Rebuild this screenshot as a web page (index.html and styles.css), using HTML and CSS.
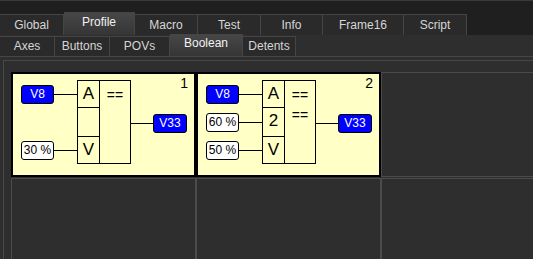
FILE: index.html
```html
<!DOCTYPE html>
<html lang="en">
<head>
    <meta charset="UTF-8">
    <title>Profile - Boolean</title>
    <link rel="stylesheet" href="styles.css">
</head>
<body>
    <div class="topbar"></div>

    <div class="tabs main-tabs">
        <div class="tab w64">Global</div>
        <div class="tab w71 active">Profile</div>
        <div class="tab w63">Macro</div>
        <div class="tab w63">Test</div>
        <div class="tab w62">Info</div>
        <div class="tab w81">Frame16</div>
        <div class="tab w63">Script</div>
    </div>

    <div class="tabs sub-tabs">
        <div class="tab w55">Axes</div>
        <div class="tab w55">Buttons</div>
        <div class="tab w60">POVs</div>
        <div class="tab w73 active">Boolean</div>
        <div class="tab w53">Detents</div>
    </div>

    <div class="panel">
        <div class="grid">
            <!-- rule 1 -->
            <div class="cell filled">
                <span class="num">1</span>
                <div class="diagram">
                    <div class="inputs">
                        <div class="in"><span class="pill var">V8</span><span class="wire"></span></div>
                        <div class="in"></div>
                        <div class="in"><span class="pill pct">30 %</span><span class="wire"></span></div>
                    </div>
                    <div class="gate">
                        <div class="slot">A</div>
                        <div class="ops">==</div>
                        <div class="slot"></div>
                        <div class="slot last">V</div>
                    </div>
                    <div class="out"><span class="wire"></span><span class="pill var">V33</span></div>
                </div>
            </div>

            <!-- rule 2 -->
            <div class="cell filled">
                <span class="num">2</span>
                <div class="diagram">
                    <div class="inputs">
                        <div class="in"><span class="pill var">V8</span><span class="wire"></span></div>
                        <div class="in"><span class="pill pct">60 %</span><span class="wire"></span></div>
                        <div class="in"><span class="pill pct">50 %</span><span class="wire"></span></div>
                    </div>
                    <div class="gate">
                        <div class="slot">A</div>
                        <div class="ops">==<br>==</div>
                        <div class="slot">2</div>
                        <div class="slot last">V</div>
                    </div>
                    <div class="out"><span class="wire"></span><span class="pill var">V33</span></div>
                </div>
            </div>

            <div class="cell"></div>
            <div class="cell"></div>
            <div class="cell"></div>
            <div class="cell"></div>
        </div>
    </div>
</body>
</html>
```

FILE: styles.css
```css
* { box-sizing: border-box; }

html, body { height: 100%; }

body {
    margin: 0;
    background: #2e2e2e;
    font-family: "Liberation Sans", Arial, sans-serif;
    font-size: 12px;
    color: #d6d6d6;
    overflow: hidden;
    display: flex;
    flex-direction: column;
}

.topbar {
    height: 14px;
    flex: none;
    background: #1f1f1f;
    border-top: 1px solid #3a3a3a;
}

.tabs {
    display: flex;
    align-items: flex-end;
    flex: none;
}
.main-tabs {
    height: 21px;
    background: #1f1f1f;
}
.sub-tabs {
    height: 22px;
    border-bottom: 1px solid #464646;
}

.tab {
    height: 21px;
    line-height: 20px;
    text-align: center;
    background: #2a2a2a;
    border: 1px solid #454545;
    border-left: none;
    border-bottom: none;
}
.sub-tabs .tab { height: 20px; line-height: 19px; }

.tab.active {
    height: 23px;
    line-height: 18px;
    color: #f2f2f2;
    background: linear-gradient(#474747, #353535);
}
.sub-tabs .tab.active { height: 22px; line-height: 17px; }

.w53 { width: 53px; }
.w55 { width: 55px; }
.w60 { width: 60px; }
.w62 { width: 62px; }
.w63 { width: 63px; }
.w64 { width: 64px; }
.w71 { width: 71px; }
.w73 { width: 73px; }
.w81 { width: 81px; }

.panel {
    flex: 1;
    min-height: 0;
    overflow: hidden;
    margin: 3px 0 0 3px;
    border-top: 1px solid #484848;
    border-left: 1px solid #484848;
    padding: 11px 0 0 7px;
}

.grid {
    display: grid;
    grid-template-columns: repeat(3, 185px);
    grid-auto-rows: 105px;
    row-gap: 1px;
}

.cell {
    border: 1px solid #4b4b4b;
    background: #2e2e2e;
}

.cell.filled {
    position: relative;
    border: 2px solid #000;
    background: #ffffc6;
    color: #000;
    padding: 6px 0 0 8px;
}

.num {
    position: absolute;
    top: 1px;
    right: 6px;
    font-size: 14px;
}

.diagram {
    display: flex;
    align-items: center;
}

.inputs {
    display: grid;
    grid-template-rows: 28px 28px 28px;
}
.in {
    display: flex;
    align-items: center;
}

.pill {
    width: 33px;
    height: 19px;
    line-height: 17px;
    text-align: center;
    border: 1px solid #000;
    border-radius: 3px;
    font-size: 12px;
}
.pill.var { background: #0000ff; color: #fff; }
.pill.pct { background: #fff; color: #000; }
.out .pill { width: 34px; }

.wire {
    width: 23px;
    height: 1px;
    background: #000;
}
.out .wire { width: 22px; }

.out {
    display: flex;
    align-items: center;
    margin-top: 3px;
}

.gate {
    display: grid;
    grid-template-columns: 22px 30px;
    grid-template-rows: 27px 29px 26px;
    border: 1px solid #000;
}
.slot {
    border-right: 1px solid #000;
    border-bottom: 1px solid #000;
    font-size: 17px;
    line-height: 26px;
    text-align: center;
}
.slot.last { border-bottom: none; }
.ops {
    grid-column: 2;
    grid-row: 1 / 4;
    padding-top: 4px;
    font-size: 14px;
    line-height: 20px;
    text-align: center;
}
```
